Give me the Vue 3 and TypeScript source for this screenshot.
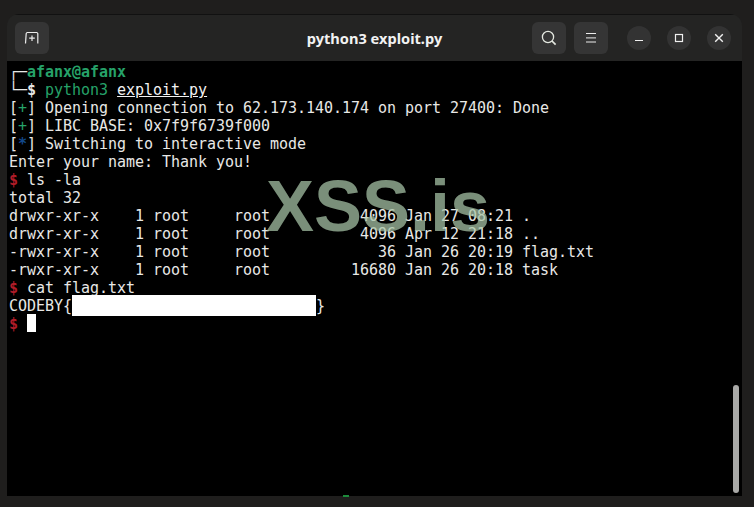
<script setup lang="ts">
interface Seg { t: string; c?: string }
const tableRows: string[] = [
  'total 32',
  'drwxr-xr-x    1 root     root          4096 Jan 27 08:21 .',
  'drwxr-xr-x    1 root     root          4096 Apr 12 21:18 ..',
  '-rwxr-xr-x    1 root     root            36 Jan 26 20:19 flag.txt',
  '-rwxr-xr-x    1 root     root         16680 Jan 26 20:18 task',
]
const logRows: Seg[][] = [
  [{ t: '[' }, { t: '+', c: 'green' }, { t: '] Opening connection to 62.173.140.174 on port 27400: Done' }],
  [{ t: '[' }, { t: '+', c: 'green' }, { t: '] LIBC BASE: 0x7f9f6739f000' }],
  [{ t: '[' }, { t: '*', c: 'blue' }, { t: '] Switching to interactive mode' }],
  [{ t: 'Enter your name: Thank you!' }],
]
</script>

<template>
  <div class="page">
    <div class="window">
      <header class="bar">
        <div class="bar-left">
          <button class="btn">
            <svg width="16" height="14" viewBox="0 0 16 14" fill="none" stroke="#ececec" stroke-width="1.2">
              <path d="M1.5 12.5 L2.2 2.6 Q2.3 1.5 3.4 1.5 H12.6 Q13.7 1.5 13.8 2.6 V12.5" />
              <path d="M8 4.5 V10 M5.2 7.2 H10.8" />
            </svg>
          </button>
        </div>
        <div class="title">python3 exploit.py</div>
        <div class="bar-right">
          <button class="btn">
            <svg width="16" height="16" viewBox="0 0 16 16" fill="none" stroke="#e4e8e0" stroke-width="1.3">
              <circle cx="7" cy="7" r="5.6" />
              <path d="M11 11 L14.6 14.6" stroke-width="1.7" />
            </svg>
          </button>
          <button class="btn">
            <svg width="12" height="12" viewBox="0 0 12 12" fill="none" stroke="#ececec" stroke-width="1">
              <path d="M1 1.5 H11 M1 5.9 H11 M1 10 H11" />
            </svg>
          </button>
          <div class="winctl">
            <button class="round">
              <svg width="10" height="10" viewBox="0 0 10 10" fill="none" stroke="#f0f0f0" stroke-width="1.2">
                <path d="M1 7.5 H9" />
              </svg>
            </button>
            <button class="round">
              <svg width="10" height="10" viewBox="0 0 10 10" fill="none" stroke="#f0f0f0" stroke-width="1.2">
                <rect x="1.5" y="1.5" width="7" height="7" />
              </svg>
            </button>
            <button class="round">
              <svg width="10" height="10" viewBox="0 0 10 10" fill="none" stroke="#f0f0f0" stroke-width="1.4">
                <path d="M1.2 1.2 L8.8 8.8 M8.8 1.2 L1.2 8.8" />
              </svg>
            </button>
          </div>
        </div>
      </header>
      <main class="term">
        <div class="line">┌─<b class="green">afanx@afanx</b></div>
        <div class="line">└─<b class="prompt">$</b> <span class="green">python3</span> <u>exploit.py</u></div>
        <div v-for="(row, i) in logRows" :key="i" class="line"><span v-for="(s, j) in row" :key="j" :class="s.c">{{ s.t }}</span></div>
        <div class="line"><span class="red">$</span> ls -la</div>
        <div v-for="row in tableRows" :key="row" class="line">{{ row }}</div>
        <div class="line"><span class="red">$</span> cat flag.txt</div>
        <div class="line flag">CODEBY{<span class="redact"></span>}</div>
        <div class="line"><span class="red">$</span> <span class="cursor"> </span></div>
        <div class="watermark">XSS.is</div>
        <div class="thumb"></div>
      </main>
    </div>
    <div class="mark"></div>
  </div>
</template>

<style scoped>
.page {
  position: relative;
  box-sizing: border-box;
  width: 754px;
  height: 507px;
  padding: 14px 12px 11px 7px;
  background: #1f1e1d;
  overflow: hidden;
}
.window {
  display: flex;
  flex-direction: column;
  height: 100%;
  border-radius: 12px 12px 0 0;
  overflow: hidden;
}
.bar {
  flex: 0 0 47px;
  display: grid;
  grid-template-columns: 1fr auto 1fr;
  align-items: center;
  background: #242423;
  box-shadow: inset 0 1px 0 #111;
}
.bar-left {
  display: flex;
  padding-left: 8px;
}
.bar-right {
  display: flex;
  justify-content: flex-end;
  gap: 8px;
  padding-right: 11px;
}
.title {
  font-family: "Noto Sans", sans-serif;
  font-weight: 700;
  font-size: 14.6px;
  color: #f2f2f2;
}
.btn {
  display: flex;
  align-items: center;
  justify-content: center;
  width: 34px;
  height: 32px;
  padding: 0;
  border: 0;
  border-radius: 6px;
  background: #353535;
}
.winctl {
  display: flex;
  gap: 16px;
  margin-left: 11px;
  align-items: center;
}
.round {
  display: flex;
  align-items: center;
  justify-content: center;
  width: 24px;
  height: 24px;
  padding: 0;
  border: 0;
  border-radius: 50%;
  background: #333;
}
.term {
  position: relative;
  flex: 1;
  padding: 2px 0 0 2px;
  background: #000;
  font-family: "DejaVu Sans Mono", monospace;
  font-size: 15px;
  letter-spacing: -0.03px;
  color: #e8e8e6;
  overflow: hidden;
}
.line {
  height: 18px;
  line-height: 18px;
  white-space: pre;
}
.green { color: #26a269; }
.blue { color: #12488b; font-weight: 700; }
.red { color: #b01c28; font-weight: 700; }
.prompt { color: #e8e8e6; }
u { color: #f2f2f2; }
.flag .redact {
  display: inline-block;
  width: 244px;
  height: 21px;
  margin: -2px 0 -3px 0;
  vertical-align: top;
  background: #fff;
}
.cursor {
  display: inline-block;
  width: 9px;
  height: 18px;
  margin-top: -1px;
  vertical-align: top;
  background: #fff;
}
.watermark {
  position: absolute;
  left: 259px;
  top: 103px;
  font-family: "Liberation Sans", sans-serif;
  font-weight: 700;
  font-size: 72px;
  line-height: 84px;
  color: #a9c6a9;
  opacity: 0.72;
}
.thumb {
  position: absolute;
  right: 3px;
  bottom: 3px;
  width: 6px;
  height: 108px;
  border-radius: 3px;
  background: #a9a9a7;
}
.mark {
  position: absolute;
  left: 343px;
  top: 495px;
  width: 6px;
  height: 2px;
  background: #1c8a3a;
}
</style>
